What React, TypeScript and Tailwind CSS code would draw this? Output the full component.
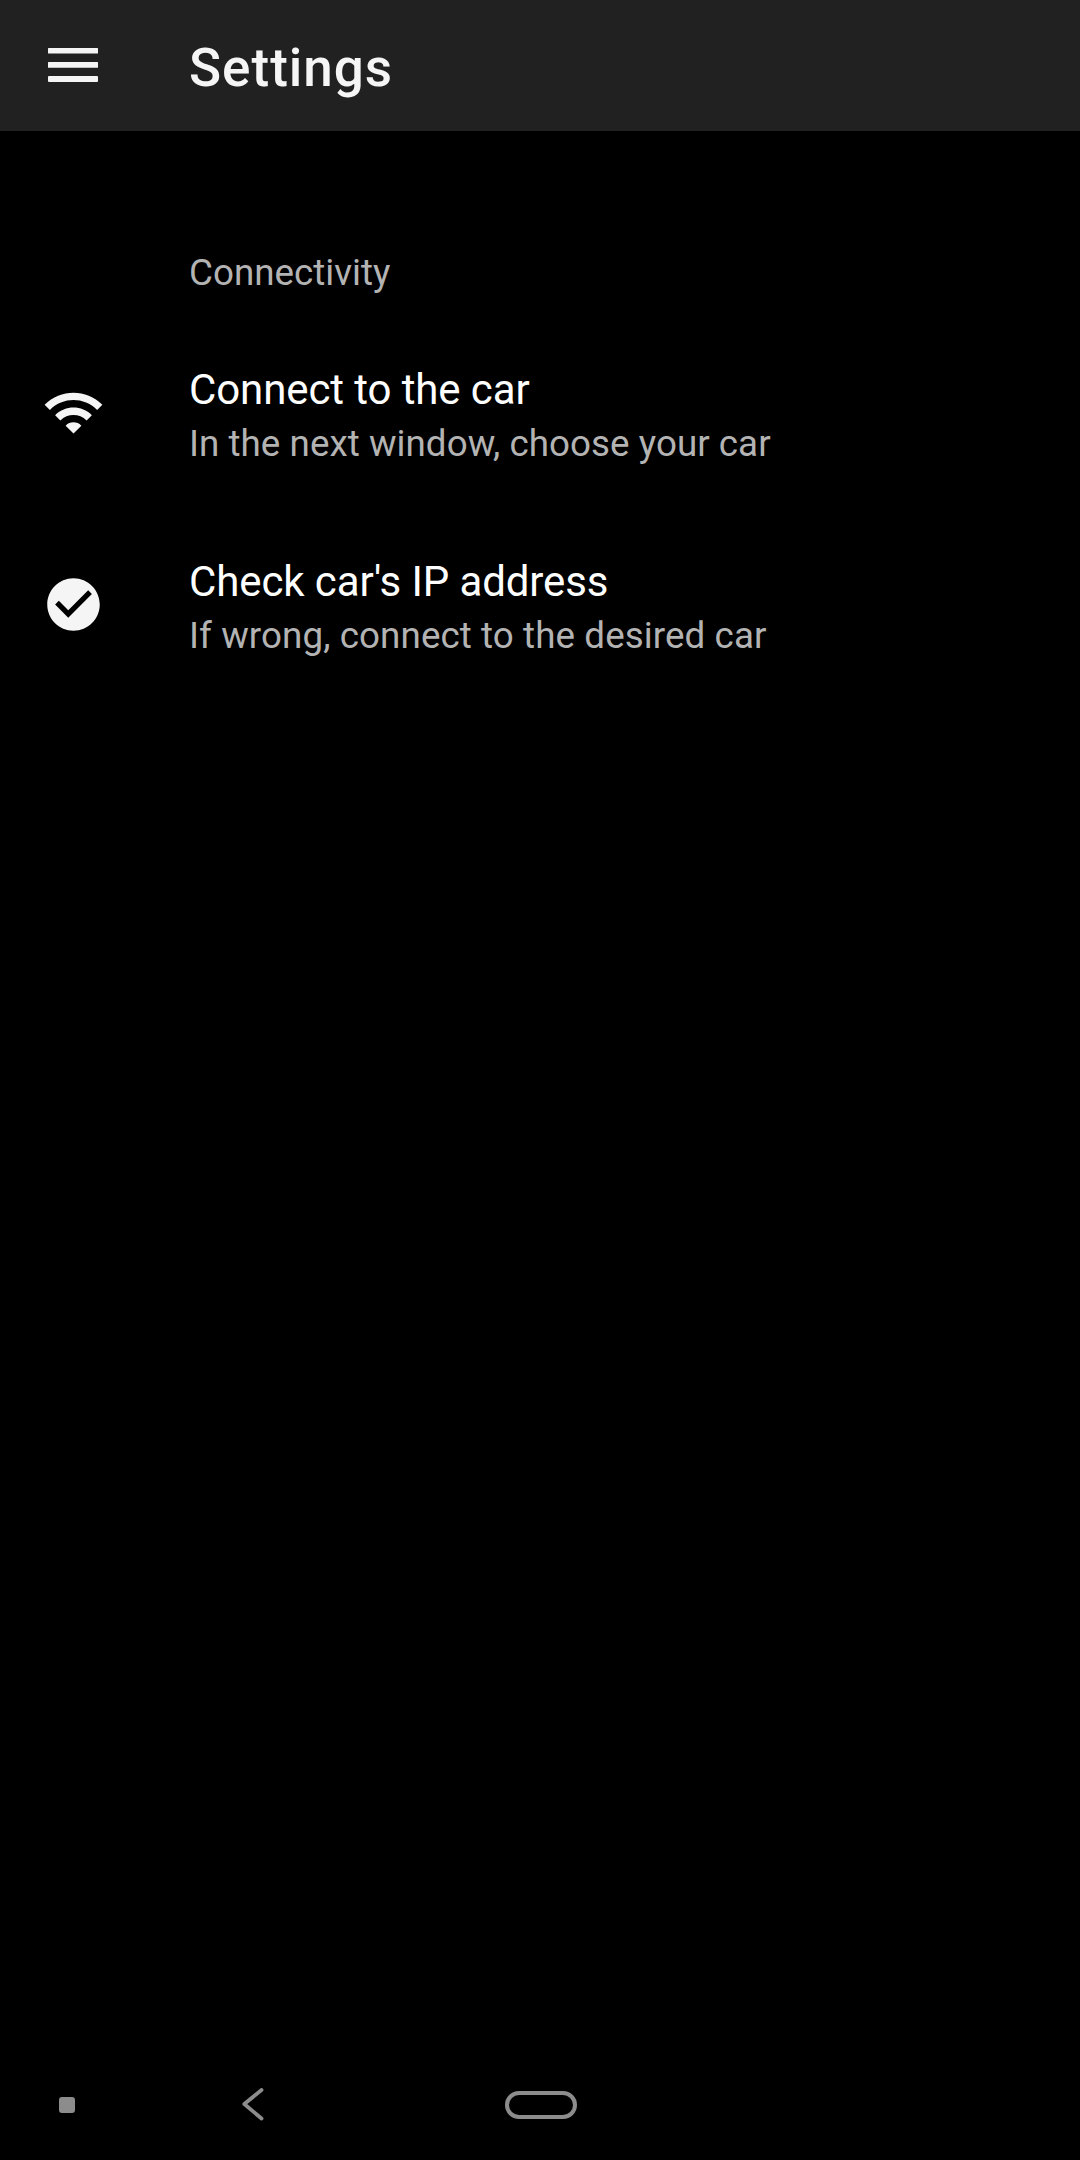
const rows = [
  {
    title: "Connect to the car",
    note: "In the next window, choose your car",
    noteSpacing: "tracking-[0.04px]",
    icon: "M1 9l2 2c4.97-4.97 13.03-4.97 18 0l2-2C16.93 2.93 7.08 2.93 1 9zm8 8l3 3 3-3c-1.65-1.66-4.34-1.66-6 0zm-4-4l2 2c2.76-2.76 7.24-2.76 10 0l2-2C15.14 9.14 8.87 9.14 5 13z",
  },
  {
    title: "Check car's IP address",
    note: "If wrong, connect to the desired car",
    noteSpacing: "tracking-[0.09px]",
    icon: "M12 2C6.48 2 2 6.48 2 12s4.48 10 10 10 10-4.48 10-10S17.52 2 12 2zm-2 15l-5-5 1.41-1.41L10 14.17l7.59-7.59L19 8l-9 9z",
  },
];

export default function App() {
  return (
    <div className="flex h-[2160px] w-[1080px] flex-col bg-black font-['Roboto',sans-serif]">
      <header className="flex h-[131px] items-center bg-[#212121] pl-12">
        <svg viewBox="0 0 50 34" className="mb-px h-[34px] w-[50px] fill-[#f5f5f5]">
          <rect y="0" width="50" height="5.6" rx="0.5" />
          <rect y="14" width="50" height="5.8" rx="0.5" />
          <rect y="28" width="50" height="6" rx="1" />
        </svg>
        <h1 className="ml-[91px] pt-1.5 text-[53px] font-medium tracking-[1px] text-[#f5f5f5]">Settings</h1>
      </header>
      <main className="flex-1 pt-[118px]">
        <h2 className="pl-[189px] text-[36.75px] leading-[48px] text-[#b3b3b3]">Connectivity</h2>
        <ul className="mt-[19px]">
          {rows.map((row) => (
            <li key={row.title} className="flex h-48 items-center pl-[42px]">
              <svg viewBox="0 0 24 24" className="size-[63px] fill-[#f5f5f5]">
                <path d={row.icon} />
              </svg>
              <div className="ml-[84px] pt-[7px]">
                <p className="text-[42px] leading-[56px] tracking-[-0.1px] text-white">{row.title}</p>
                <p className={`text-[36.75px] leading-[52px] text-[#b3b3b3] ${row.noteSpacing}`}>{row.note}</p>
              </div>
            </li>
          ))}
        </ul>
      </main>
      <nav className="flex h-[110px] items-center pl-[59px]">
        <span className="size-4 rounded-[3px] bg-[#8c8c8c]" />
        <svg viewBox="0 0 22 34" className="ml-[167px] h-[34px] w-[22px]" fill="none" stroke="#8c8c8c" strokeWidth="3.8" strokeLinecap="round" strokeLinejoin="round">
          <path d="M19.5 2L2.3 16L19.5 30.5" />
        </svg>
        <span className="ml-[241px] h-7 w-[72px] rounded-full border-4 border-[#8c8c8c]" />
      </nav>
    </div>
  );
}
